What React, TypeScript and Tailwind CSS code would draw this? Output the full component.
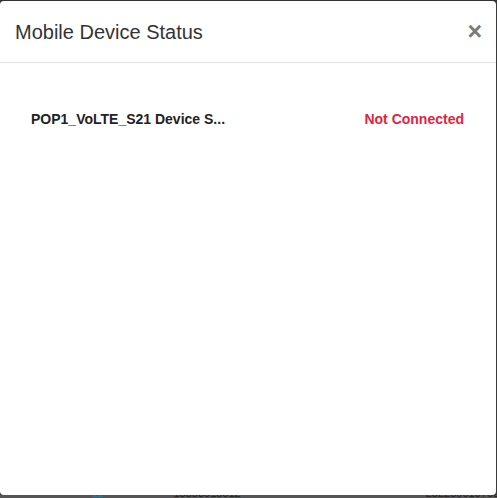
import React from "react";

export default function App() {
  return (
    <div
      className="w-[497px] h-[498px] bg-[#3a3a3a] overflow-hidden flex flex-col"
      style={{ fontFamily: '"Liberation Sans", Arial, sans-serif' }}
    >
      <div className="h-[1px] shrink-0 bg-[#333]" />
      <div className="w-[496px] h-[494px] shrink-0 bg-white rounded-[4px] flex flex-col">
        <div className="h-[62px] shrink-0 flex items-center justify-between pl-[15px] pr-[16px] border-b border-[#e5e5e5]">
          <h4 className="text-[20px] leading-[28px] text-[#333]">Mobile Device Status</h4>
          <span className="text-[25px] leading-none font-bold text-[#7a7a7a] pr-[-2px] translate-x-[2px]">×</span>
        </div>
        <div className="flex items-center justify-between pl-[31px] pr-[32px] pt-[46px] h-[20px] box-content">
          <span className="text-[14px] leading-[20px] font-bold text-[#222]">POP1_VoLTE_S21 Device S...</span>
          <span className="text-[14px] leading-[20px] font-bold text-[#e4233e]">Not Connected</span>
        </div>
      </div>
      <div className="flex-1 bg-[#555] relative overflow-hidden">
        <div className="absolute top-[-8px] left-0 w-full flex text-[11px] text-[#222] leading-[12px]">
          <span className="ml-[64px] w-[10px] bg-[#222] h-[12px]" />
          <span className="ml-[28px] text-[#2a7a9a]">11</span>
          <span className="ml-[70px]">13853018012</span>
          <span className="ml-[185px]">2322890197098911</span>
        </div>
      </div>
    </div>
  );
}
